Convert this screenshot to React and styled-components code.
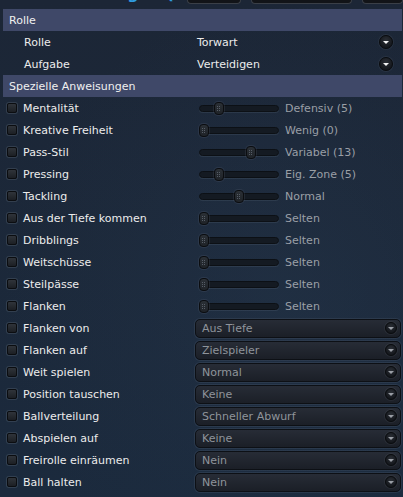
import styled, { createGlobalStyle } from 'styled-components';

const GlobalStyle = createGlobalStyle`
  html, body {
    margin: 0;
    padding: 0;
    background: #1b2738;
  }
  body {
    font-family: "DejaVu Sans", Verdana, sans-serif;
    font-size: 11px;
    color: #ececec;
  }
`;

const Page = styled.div`
  width: 403px;
  height: 497px;
  overflow: hidden;
  background:
    radial-gradient(ellipse at 70% 60%, rgba(40, 58, 80, 0.35), transparent 70%),
    linear-gradient(180deg, #1c2636 0%, #1b2a3d 100%);
`;

const TopStrip = styled.div`
  height: 9px;
  overflow: hidden;
  display: flex;
  align-items: flex-start;
`;

const PageTitle = styled.div`
  margin-left: 40px;
  width: 145px;
  height: 19px;
  line-height: 19px;
  margin-top: -16px;
  font-size: 16px;
  font-weight: bold;
  color: #2f9be0;
  white-space: nowrap;
  overflow: hidden;
`;

const TopButton = styled.div`
  width: ${(p) => p.$w}px;
  margin-left: ${(p) => p.$ml}px;
  height: 3px;
  background: #121418;
  border: 1px solid #3a3f47;
  border-top: none;
  border-radius: 0 0 4px 4px;
`;

const SectionHeader = styled.div`
  margin: 0 1px 0 3px;
  height: 22px;
  display: flex;
  align-items: center;
  padding-left: 6px;
  background: #3f4868;
  color: #f0f0f0;
`;

const RoleRow = styled.div`
  height: 22px;
  display: grid;
  grid-template-columns: 173px 1fr 24px;
  align-items: center;
  padding-left: 24px;
`;

const RoleText = styled.span`
  color: #ececec;
`;

const RoundArrow = styled.span`
  width: ${(p) => p.$size}px;
  height: ${(p) => p.$size}px;
  border-radius: 50%;
  background: radial-gradient(circle at 50% 35%, #2a2e35 0%, #15181d 70%);
  border: 1px solid #0a0c0f;
  box-shadow: 0 0 0 1px rgba(255, 255, 255, 0.05);
  display: flex;
  align-items: center;
  justify-content: center;
  box-sizing: border-box;

  &::after {
    content: '';
    display: block;
    margin-top: 1px;
    border-left: ${(p) => p.$tri}px solid transparent;
    border-right: ${(p) => p.$tri}px solid transparent;
    border-top: ${(p) => p.$tri}px solid ${(p) => p.$color};
  }
`;

const InstructionRow = styled.div`
  height: 22px;
  display: flex;
  align-items: center;
`;

const Check = styled.span`
  width: 10px;
  height: 10px;
  margin-left: 7px;
  margin-right: 6px;
  border-radius: 2px;
  box-sizing: border-box;
  background: linear-gradient(180deg, #30343a 0%, #1c1f24 100%);
  border: 1px solid #0b0d10;
  box-shadow: 0 0 0 1px rgba(120, 130, 145, 0.25);
  flex-shrink: 0;
`;

const Label = styled.span`
  width: 169px;
  color: #ececec;
  white-space: nowrap;
  flex-shrink: 0;
`;

const SliderWrap = styled.div`
  display: flex;
  align-items: center;
  gap: 6px;
`;

const Track = styled.div`
  position: relative;
  margin-left: 7px;
  width: 80px;
  height: 7px;
  box-sizing: border-box;
  border-radius: 4px;
  background: #141a22;
  border: 1px solid #0c1015;
  box-shadow: 0 1px 0 rgba(110, 125, 145, 0.18);
`;

const Handle = styled.span`
  position: absolute;
  top: -4px;
  width: 10px;
  height: 13px;
  margin-left: -5px;
  box-sizing: border-box;
  border-radius: 4px;
  background: linear-gradient(180deg, #2b3036 0%, #1f2328 100%);
  border: 1px solid #0b0d10;
  box-shadow: 0 0 0 1px rgba(120, 130, 145, 0.15);

  &::after {
    content: '';
    position: absolute;
    left: 2px;
    top: 3px;
    width: 1px;
    height: 1px;
    background: #555c66;
    box-shadow: 2px 0 #555c66, 0 2px #555c66, 2px 2px #555c66, 0 4px #555c66, 2px 4px #555c66;
  }
`;

const SliderValue = styled.span`
  color: #9a9fa6;
  white-space: nowrap;
`;

const Select = styled.div`
  margin-left: 3px;
  width: 206px;
  height: 19px;
  box-sizing: border-box;
  display: flex;
  align-items: center;
  justify-content: space-between;
  padding: 0 3px 0 6px;
  border-radius: 5px;
  background: linear-gradient(180deg, #272c36 0%, #1b1f27 100%);
  border: 1px solid #0d1015;
  box-shadow: 0 0 0 1px rgba(90, 105, 125, 0.22);
  color: #8f949b;
`;

const roleRows = [
  { label: 'Rolle', value: 'Torwart' },
  { label: 'Aufgabe', value: 'Verteidigen' },
];

const sliders = [
  { label: 'Mentalität', value: 'Defensiv (5)', pos: 19 },
  { label: 'Kreative Freiheit', value: 'Wenig (0)', pos: 4 },
  { label: 'Pass-Stil', value: 'Variabel (13)', pos: 51 },
  { label: 'Pressing', value: 'Eig. Zone (5)', pos: 19 },
  { label: 'Tackling', value: 'Normal', pos: 39 },
  { label: 'Aus der Tiefe kommen', value: 'Selten', pos: 4 },
  { label: 'Dribblings', value: 'Selten', pos: 4 },
  { label: 'Weitschüsse', value: 'Selten', pos: 4 },
  { label: 'Steilpässe', value: 'Selten', pos: 4 },
  { label: 'Flanken', value: 'Selten', pos: 4 },
];

const selects = [
  { label: 'Flanken von', value: 'Aus Tiefe' },
  { label: 'Flanken auf', value: 'Zielspieler' },
  { label: 'Weit spielen', value: 'Normal' },
  { label: 'Position tauschen', value: 'Keine' },
  { label: 'Ballverteilung', value: 'Schneller Abwurf' },
  { label: 'Abspielen auf', value: 'Keine' },
  { label: 'Freirolle einräumen', value: 'Nein' },
  { label: 'Ball halten', value: 'Nein' },
];

const App = () => (
  <>
    <GlobalStyle />
    <Page>
      <TopStrip>
        <PageTitle>Anweisungen (TW)</PageTitle>
        <TopButton $ml={6} $w={54} />
        <TopButton $ml={10} $w={102} />
        <TopButton $ml={10} $w={40} />
      </TopStrip>

      <SectionHeader>Rolle</SectionHeader>
      {roleRows.map((r) => (
        <RoleRow key={r.label}>
          <RoleText>{r.label}</RoleText>
          <RoleText>{r.value}</RoleText>
          <RoundArrow $size={14} $tri={3.5} $color="#f4f4f4" />
        </RoleRow>
      ))}

      <SectionHeader>Spezielle Anweisungen</SectionHeader>
      {sliders.map((s) => (
        <InstructionRow key={s.label}>
          <Check />
          <Label>{s.label}</Label>
          <SliderWrap>
            <Track>
              <Handle style={{ left: `${s.pos}px` }} />
            </Track>
            <SliderValue>{s.value}</SliderValue>
          </SliderWrap>
        </InstructionRow>
      ))}
      {selects.map((s) => (
        <InstructionRow key={s.label}>
          <Check />
          <Label>{s.label}</Label>
          <Select>
            <span>{s.value}</span>
            <RoundArrow $size={12} $tri={3} $color="#9a9ea5" />
          </Select>
        </InstructionRow>
      ))}
    </Page>
  </>
);

export default App;
